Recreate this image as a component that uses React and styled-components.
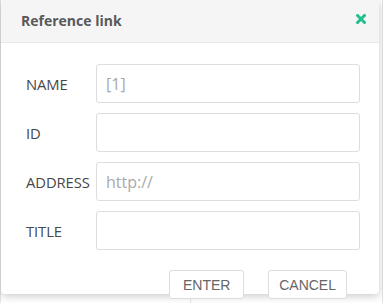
import React from "react";
import styled, { createGlobalStyle } from "styled-components";

const Global = createGlobalStyle`
  html, body { margin: 0; padding: 0; background: #fff; }
  body { width: 383px; height: 303px; overflow: hidden; font-family: "Open Sans", "Noto Sans", sans-serif; }
  * { box-sizing: border-box; }
`;

const Page = styled.div`
  position: relative;
  width: 383px;
  height: 303px;
  display: flex;
  background: #fff;
`;

const PaneLeft = styled.div`
  width: 191px;
  height: 100%;
  border-left: 1px solid #e4e4e4;
  border-right: 1px solid #e4e4e4;
`;

const PaneRight = styled.div`
  flex: 1;
  height: 100%;
  border-right: 1px solid #e4e4e4;
`;

const Dialog = styled.div`
  position: absolute;
  left: 1px;
  top: 0;
  width: 378px;
  height: 294px;
  background: #fff;
  border-radius: 0 0 4px 4px;
  box-shadow: 0 2px 8px rgba(0, 0, 0, 0.22);
  display: flex;
  flex-direction: column;
`;

const Header = styled.div`
  height: 43px;
  flex: none;
  display: flex;
  align-items: center;
  justify-content: space-between;
  padding: 0 13px 0 20px;
  background: #f5f5f5;
  border-bottom: 1px solid #e8e8e8;
`;

const Title = styled.div`
  font-family: "Open Sans", sans-serif;
  font-size: 14px;
  font-weight: 700;
  color: #595959;
  margin-top: -2px;
`;

const Close = styled.button`
  border: 0;
  background: none;
  padding: 0;
  width: 10px;
  height: 10px;
  display: flex;
  align-items: center;
  justify-content: center;
  margin-top: -5px;
  cursor: pointer;
`;

const Body = styled.div`
  padding: 21px 19px 0 25px;
  display: flex;
  flex-direction: column;
  gap: 10px;
`;

const Row = styled.div`
  display: flex;
  align-items: center;
  height: 39px;
`;

const Label = styled.label`
  width: 70px;
  flex: none;
  font-family: "Open Sans", sans-serif;
  font-size: 14.8px;
  letter-spacing: -0.1px;
  color: #484848;
`;

const Input = styled.input`
  flex: 1;
  height: 39px;
  border: 1px solid #ddd;
  border-radius: 3px;
  padding: 0 9px;
  font-family: "Open Sans", sans-serif;
  font-size: 16px;
  color: #555;
  outline: none;
  &::placeholder { color: #aaa; }
`;

const Actions = styled.div`
  display: flex;
  justify-content: flex-end;
  gap: 24px;
  padding: 20px 32px 0 0;
`;

const Button = styled.button`
  min-width: 75px;
  height: 29px;
  padding: 0 10px;
  background: #fff;
  border: 1px solid #ddd;
  border-radius: 3px;
  font-family: "Liberation Sans", Arial, sans-serif;
  font-size: 14px;
  color: #666;
  cursor: pointer;
`;

const fields = [
  { label: "NAME", placeholder: "[1]" },
  { label: "ID", placeholder: "" },
  { label: "ADDRESS", placeholder: "http://" },
  { label: "TITLE", placeholder: "" },
];

export default function App() {
  return (
    <>
      <Global />
      <Page>
        <PaneLeft />
        <PaneRight />
        <Dialog>
          <Header>
            <Title>Reference link</Title>
            <Close aria-label="close">
              <svg width="10" height="10" viewBox="0 0 10 10">
                <path d="M1.5 1.5 L8.5 8.5 M8.5 1.5 L1.5 8.5" stroke="#22c08f" strokeWidth="3" strokeLinecap="square" />
              </svg>
            </Close>
          </Header>
          <Body>
            {fields.map((f) => (
              <Row key={f.label}>
                <Label>{f.label}</Label>
                <Input placeholder={f.placeholder} />
              </Row>
            ))}
          </Body>
          <Actions>
            <Button>ENTER</Button>
            <Button>CANCEL</Button>
          </Actions>
        </Dialog>
      </Page>
    </>
  );
}
